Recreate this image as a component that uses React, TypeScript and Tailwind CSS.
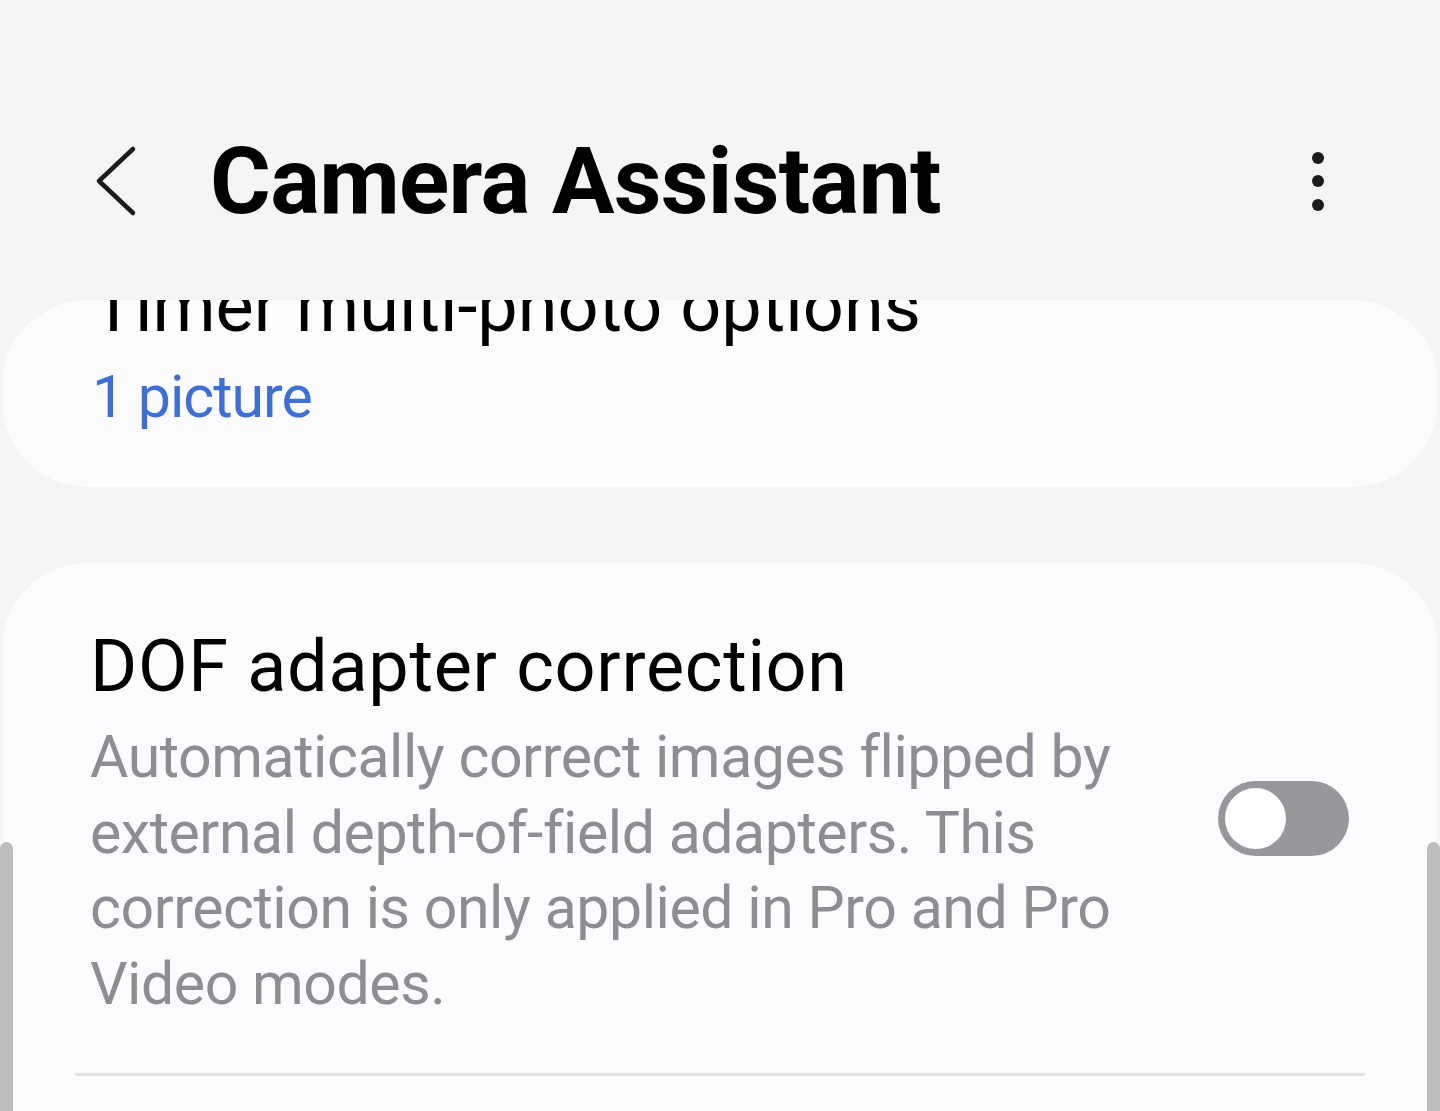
import { useState } from "react";

const FONT = { fontFamily: "Roboto, 'Noto Sans', sans-serif" };

const BackIcon = () => (
  <svg width="44" height="72" viewBox="0 0 44 72" fill="none">
    <polyline
      points="38,4 4,36 38,68"
      stroke="#1b1b1d"
      strokeWidth="4.5"
      strokeLinecap="round"
      strokeLinejoin="round"
    />
  </svg>
);

const MoreIcon = () => (
  <svg width="16" height="64" viewBox="0 0 16 64">
    <circle cx="8" cy="9" r="6" fill="#1b1b1d" />
    <circle cx="8" cy="32" r="6" fill="#1b1b1d" />
    <circle cx="8" cy="56" r="6" fill="#1b1b1d" />
  </svg>
);

const Toggle = ({ on, onChange }: { on: boolean; onChange: () => void }) => (
  <button
    onClick={onChange}
    className={
      on
        ? "mb-[8px] flex h-[75px] w-[131px] shrink-0 items-center justify-end rounded-full bg-[#3e70d6] px-[7px]"
        : "mb-[8px] flex h-[75px] w-[131px] shrink-0 items-center justify-start rounded-full bg-[#98989c] px-[7px]"
    }
  >
    <span className="block h-[61px] w-[61px] rounded-full bg-white" />
  </button>
);

const App = () => {
  const [dof, setDof] = useState(false);

  return (
    <div
      className="relative h-[1111px] w-full overflow-hidden bg-[#f5f5f7]"
      style={FONT}
    >
      {/* Header */}
      <div className="flex h-[300px] items-center pt-[62px]">
        <div className="ml-[95px] flex w-[44px] items-center">
          <BackIcon />
        </div>
        <h1 className="ml-[71px] text-[93px] font-bold leading-none tracking-[-0.7px] text-black">
          Camera Assistant
        </h1>
        <div className="ml-auto mr-[114px]">
          <MoreIcon />
        </div>
      </div>

      {/* Timer card, scrolled under the header */}
      <div className="mx-[2px] h-[187px] overflow-hidden rounded-[86px] bg-[#fcfcfe] px-[90px]">
        <div className="mt-[-36px] text-[72px] leading-[86px] text-black">
          Timer multi-photo options
        </div>
        <div className="mt-[12px] text-[59px] leading-[70px] tracking-[-1px] text-[#3d6fd4]">
          1 picture
        </div>
      </div>

      {/* DOF card */}
      <div className="mx-[2px] mt-[76px] h-[600px] rounded-t-[86px] bg-[#fcfcfe]">
        <div className="flex items-center pl-[88px] pr-[89px] pt-[61px] pb-[52px]">
          <div className="flex-1">
            <div className="text-[72px] leading-[86px] tracking-[0.7px] text-black">
              DOF adapter correction
            </div>
            <div className="mt-[9px] text-[59px] leading-[75.5px] tracking-[-0.45px] text-[#8e8e92]">
              Automatically correct images flipped by
              <br />
              external depth-of-field adapters. This
              <br />
              correction is only applied in Pro and Pro
              <br />
              Video modes.
            </div>
          </div>
          <Toggle on={dof} onChange={() => setDof(!dof)} />
        </div>
        <div className="mx-[73px] h-[3px] bg-[#e3e3e5]" />
      </div>

      {/* scroll edge indicators */}
      <div className="absolute left-0 top-[842px] h-[300px] w-[13px] rounded-t-full bg-[#bdbdbf]" />
      <div className="absolute right-0 top-[842px] h-[300px] w-[13px] rounded-t-full bg-[#bdbdbf]" />
    </div>
  );
};

export default App;
